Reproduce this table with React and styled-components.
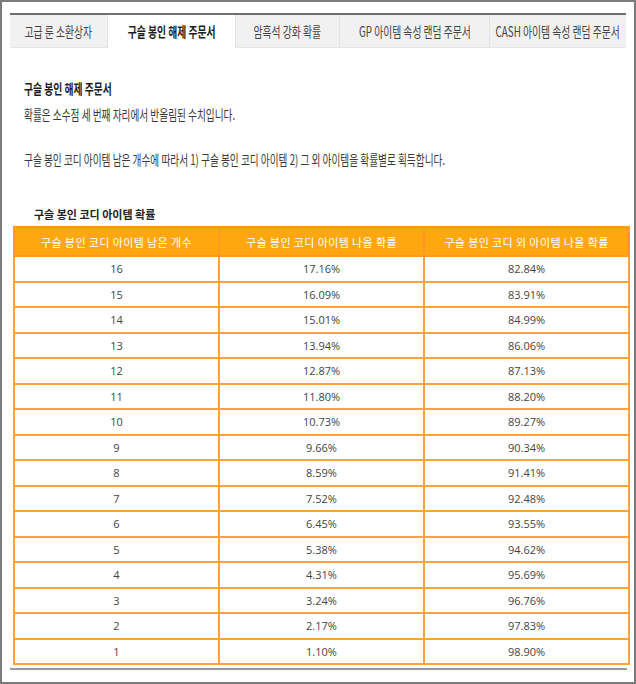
import * as React from 'react';
import styled, { createGlobalStyle } from 'styled-components';

const rates = [
    [16, '17.16%', '82.84%'],
    [15, '16.09%', '83.91%'],
    [14, '15.01%', '84.99%'],
    [13, '13.94%', '86.06%'],
    [12, '12.87%', '87.13%'],
    [11, '11.80%', '88.20%'],
    [10, '10.73%', '89.27%'],
    [9, '9.66%', '90.34%'],
    [8, '8.59%', '91.41%'],
    [7, '7.52%', '92.48%'],
    [6, '6.45%', '93.55%'],
    [5, '5.38%', '94.62%'],
    [4, '4.31%', '95.69%'],
    [3, '3.24%', '96.76%'],
    [2, '2.17%', '97.83%'],
    [1, '1.10%', '98.90%']
];

const tabs = [
    { label: '고급 룬 소환상자', width: 98 },
    { label: '구슬 봉인 해제 주문서', width: 128, active: true },
    { label: '암흑석 강화 확률', width: 104 },
    { label: 'GP 아이템 속성 랜덤 주문서', width: 150 },
    { label: 'CASH 아이템 속성 랜덤 주문서', width: 136 }
];

export default function App() {
    return (
        <>
            <GlobalStyle />
            <Frame>
                <TabBar>
                    {tabs.map((tab) => (
                        <Tab key={tab.label} $width={tab.width} $active={tab.active}>
                            <Narrow $origin="center">{tab.label}</Narrow>
                        </Tab>
                    ))}
                </TabBar>

                <Content>
                    <Title>
                        <Narrow>구슬 봉인 해제 주문서</Narrow>
                    </Title>
                    <Desc>
                        <Narrow $scale={0.69}>확률은 소수점 세 번째 자리에서 반올림된 수치입니다.</Narrow>
                    </Desc>
                    <Desc $gap>
                        <Narrow $scale={0.69}>구슬 봉인 코디 아이템 남은 개수에 따라서 1) 구슬 봉인 코디 아이템 2) 그 외 아이템을 확률별로 획득합니다.</Narrow>
                    </Desc>

                    <Caption>구슬 봉인 코디 아이템 확률</Caption>
                    <Table>
                        <thead>
                            <tr>
                                <Th>구슬 봉인 코디 아이템 남은 개수</Th>
                                <Th>구슬 봉인 코디 아이템 나올 확률</Th>
                                <Th>구슬 봉인 코디 외 아이템 나올 확률</Th>
                            </tr>
                        </thead>
                        <tbody>
                            {rates.map(([count, hit, miss]) => (
                                <tr key={count}>
                                    <Td>{count}</Td>
                                    <Td>{hit}</Td>
                                    <Td>{miss}</Td>
                                </tr>
                            ))}
                        </tbody>
                    </Table>
                </Content>
                <BottomRule />
            </Frame>
        </>
    );
}

const GlobalStyle = createGlobalStyle`
    html, body {
        margin: 0;
        padding: 0;
        background: #fff;
    }
    body {
        font-family: "Noto Sans CJK KR", "Noto Sans", sans-serif;
        color: #333;
    }
`;

const Frame = styled.div`
    box-sizing: border-box;
    width: 636px;
    height: 684px;
    border: 2px solid #7b7b7b;
    padding: 11px 8px 0 8px;
    overflow: hidden;
`;

const TabBar = styled.div`
    display: flex;
    width: 616px;
    border-top: 2px solid #6f6f6f;
    background: #f1f1f1;
`;

const Tab = styled.div`
    box-sizing: border-box;
    width: ${(p) => p.$width}px;
    height: 33px;
    display: flex;
    align-items: center;
    justify-content: center;
    white-space: nowrap;
    font-size: 14px;
    font-weight: ${(p) => (p.$active ? 700 : 400)};
    color: ${(p) => (p.$active ? '#1e1e1e' : '#444')};
    background: ${(p) => (p.$active ? '#fff' : '#f1f1f1')};
    border-right: 1px solid #e2e2e2;
    border-bottom: 1px solid ${(p) => (p.$active ? '#fff' : '#e6e6e6')};

    &:last-child {
        border-right: 0;
    }
`;

const Narrow = styled.span`
    display: inline-block;
    white-space: nowrap;
    transform: scaleX(${(p) => p.$scale || 0.7});
    transform-origin: ${(p) => p.$origin || 'left'} center;
`;

const Content = styled.div`
    padding: 30px 0 0 14px;
`;

const Title = styled.div`
    font-size: 14px;
    font-weight: 700;
    color: #1c1c1c;
    line-height: 20px;
`;

const Desc = styled.div`
    font-size: 14px;
    color: #3a3a3a;
    line-height: 20px;
    margin-top: ${(p) => (p.$gap ? 25 : 6)}px;
`;

const Caption = styled.div`
    font-size: 11px;
    font-weight: 700;
    color: #222;
    line-height: 16px;
    margin: 37px 0 4px 10px;
`;

const Table = styled.table`
    margin-left: -11px;
    width: 617px;
    border-collapse: collapse;
    table-layout: fixed;
    font-family: "Noto Sans CJK KR", "Open Sans", sans-serif;
`;

const Th = styled.th`
    height: 27px;
    padding: 0;
    background: #ffa70f;
    border: 2px solid #ff9820;
    color: #fff;
    font-size: 11px;
    letter-spacing: 0.4px;
    font-weight: 400;
    text-align: center;
`;

const Td = styled.td`
    height: 23.5px;
    padding: 0;
    border: 2px solid #ffa23a;
    color: #444;
    font-family: "Open Sans", "Noto Sans", sans-serif;
    font-size: 11px;
    text-align: center;
`;

const BottomRule = styled.div`
    width: 617px;
    margin-top: 3px;
    border-top: 2px solid #9a9a9a;
`;
